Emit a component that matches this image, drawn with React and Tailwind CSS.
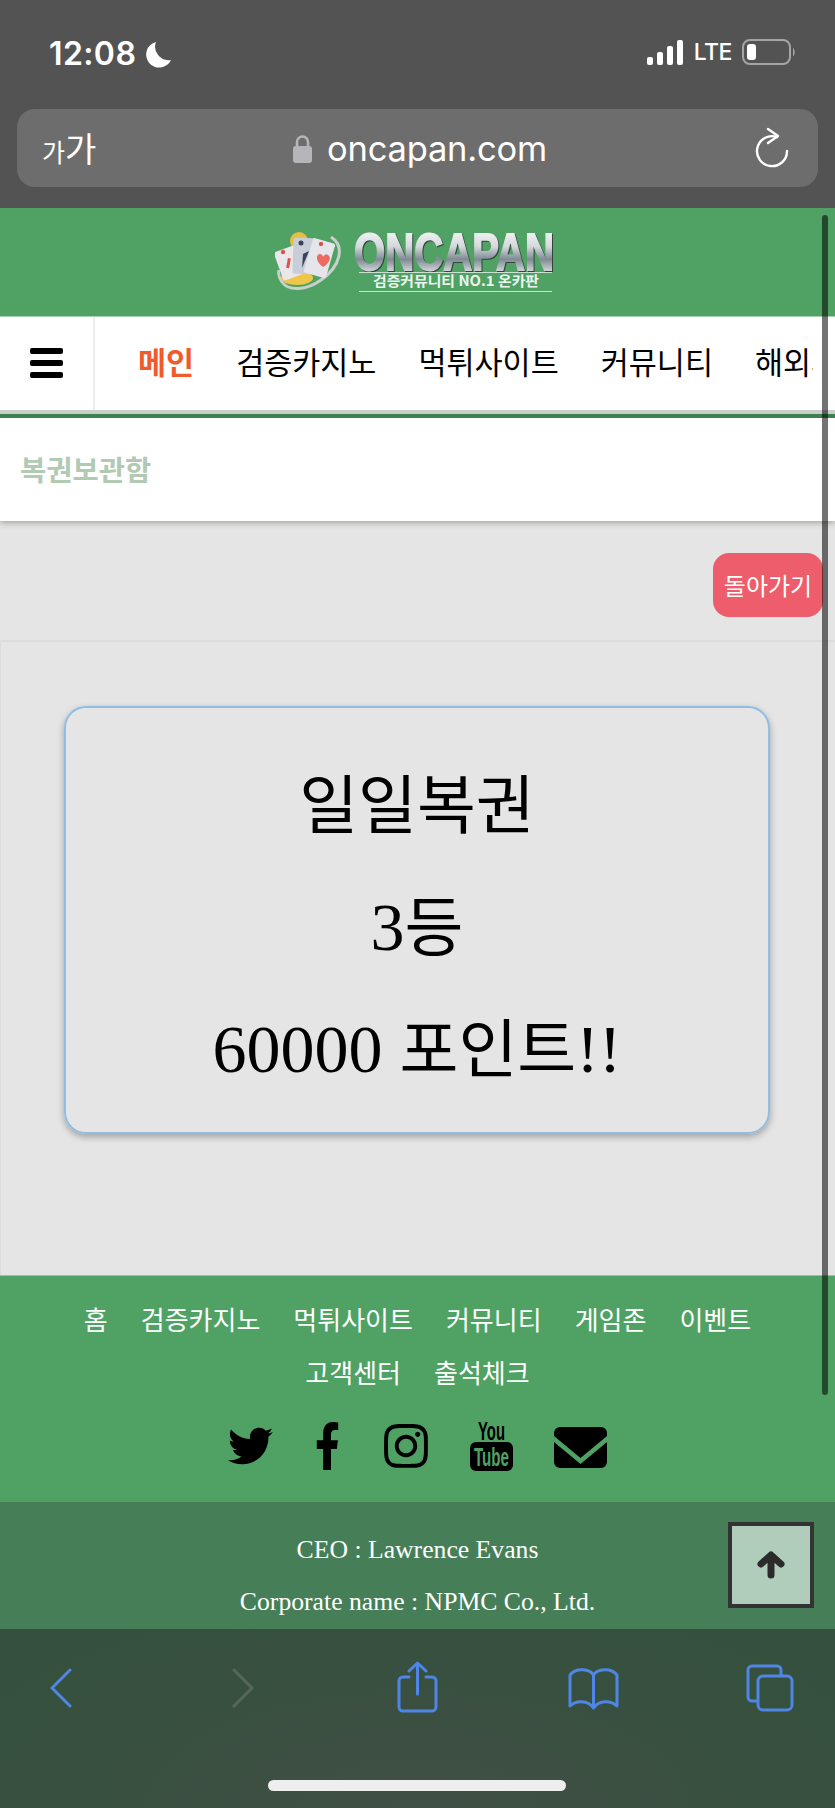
import React from 'react'
import { FaTwitter, FaFacebookF, FaInstagram } from 'react-icons/fa'

const KR = "font-['Noto_Sans_CJK_KR',sans-serif]"

const NAV = ['검증카지노', '먹튀사이트', '커뮤니티', '해외사이트']
const FOOTER_LINKS = ['홈', '검증카지노', '먹튀사이트', '커뮤니티', '게임존', '이벤트', '고객센터', '출석체크']

function StatusBar() {
  return (
    <div className="h-[109px] flex items-start justify-between pt-[37px] pl-[49px] pr-[39px] text-white">
      <div className="flex items-center gap-[9px]">
        <span className="font-['Inter',sans-serif] font-semibold text-[32px] leading-[34px] tracking-[0.4px]">12:08</span>
        <svg width="27" height="27" viewBox="0 0 27 27" fill="#fff">
          <path d="M11 1 A13 13 0 1 0 26 19 A13.5 13.5 0 0 1 11 1 Z" />
        </svg>
      </div>
      <div className="flex items-center gap-[10px] h-[30px]">
        <svg width="37" height="25" viewBox="0 0 37 25" fill="#fff">
          <rect x="0" y="17" width="6" height="8" rx="2" />
          <rect x="10" y="12" width="6" height="13" rx="2" />
          <rect x="20" y="6" width="6" height="19" rx="2" />
          <rect x="30" y="0" width="6" height="25" rx="2" />
        </svg>
        <span className="font-['Inter',sans-serif] font-medium text-[23px] leading-[30px] tracking-[-0.5px]">LTE</span>
        <svg width="54" height="26" viewBox="0 0 54 26" fill="none">
          <rect x="1" y="1" width="47" height="24" rx="7" stroke="#a5a5a5" strokeWidth="2" />
          <rect x="5" y="5" width="9" height="16" rx="3" fill="#fff" />
          <path d="M51 9 C53 10 53.5 16 51 17 Z" fill="#a5a5a5" />
        </svg>
      </div>
    </div>
  )
}

function UrlBar() {
  return (
    <div className="mx-[17px] h-[78px] rounded-[18px] bg-[#6d6d6d] flex items-center relative text-white">
      <span className={`${KR} ml-[25px] text-[34px] leading-none`}>
        <span className="text-[25px]">가</span>가
      </span>
      <div className="absolute left-[276px] top-[22px] flex items-center gap-[15px]">
        <svg width="19" height="28" viewBox="0 0 19 28" fill="none">
          <path d="M4 13 V7 A5.5 5.5 0 0 1 15 7 V13" stroke="#b5b5ba" strokeWidth="2.6" />
          <rect x="0" y="11" width="19" height="17" rx="3" fill="#b5b5ba" />
        </svg>
        <span className="font-['Inter',sans-serif] text-[34.5px] leading-[36px] tracking-[-0.2px]">oncapan.com</span>
      </div>
      <svg className="absolute right-[29px] top-[18px]" width="34" height="42" viewBox="0 0 34 42" fill="none" stroke="#fff" strokeWidth="2.4" strokeLinecap="round" strokeLinejoin="round">
        <path d="M22 10 A15 15 0 1 0 32 24" />
        <path d="M13 2 L23 9 L13 16" />
      </svg>
    </div>
  )
}

function Logo() {
  return (
    <svg width="286" height="84" viewBox="0 -12 286 84">
      <defs>
        <linearGradient id="chrome" x1="0" y1="0" x2="0" y2="1">
          <stop offset="0" stopColor="#ffffff" />
          <stop offset="0.4" stopColor="#d4d8db" />
          <stop offset="0.62" stopColor="#7f8a93" />
          <stop offset="0.8" stopColor="#c6cbcf" />
          <stop offset="1" stopColor="#f6f6f6" />
        </linearGradient>
      </defs>
      <circle cx="24" cy="9" r="9" fill="#e8bd45" />
      <ellipse cx="22" cy="46" rx="16" ry="7" fill="#efc64a" />
      <path d="M56 5 C70 14 66 34 46 48 C32 58 14 60 7 50 C4 46 3 42 4 38" fill="none" stroke="#c9cfcb" strokeWidth="3" />
      <rect x="3" y="16" width="22" height="30" rx="2" fill="#e9e7ea" transform="rotate(-20 14 31)" />
      <rect x="18" y="6" width="22" height="36" rx="2" fill="#c8cdd8" transform="rotate(2 29 24)" />
      <rect x="33" y="8" width="23" height="36" rx="2" fill="#e5e6ec" transform="rotate(16 44 26)" />
      <path d="M28 22 L34 19 L27 36 Z" fill="#39425a" />
      <circle cx="26" cy="11" r="2.5" fill="#39425a" />
      <path d="M48 35 C40 29 41 22 45 22 C47 22 48 24 48 25 C49 23 51 22 53 23 C57 25 54 32 48 35 Z" fill="#ec6a5f" />
      <rect x="12" y="26" width="3" height="10" fill="#d9564f" transform="rotate(10 13 31)" />
      <circle cx="8" cy="20" r="2.2" fill="#d9564f" />
      <circle cx="46" cy="12" r="2.2" fill="#d9564f" />
      <text
        x="79"
        y="38"
        className="drop-shadow-[1px_1px_0_#33443b]"
        fontFamily="Liberation Sans"
        fontWeight="700"
        fontSize="51"
        textLength="200"
        lengthAdjust="spacingAndGlyphs"
        fill="url(#chrome)"
        stroke="url(#chrome)"
        strokeWidth="1.8"
      >
        ONCAPAN
      </text>
      <rect x="84" y="40" width="193" height="1" fill="#c9e2cf" />
      <text x="98" y="54" fontFamily="Noto Sans CJK KR" fontWeight="700" fontSize="14" textLength="166" lengthAdjust="spacingAndGlyphs" fill="#eef5ef">검증커뮤니티 NO.1 온카판</text>
      <rect x="84" y="59" width="193" height="1" fill="#c9e2cf" />
    </svg>
  )
}

function YoutubeIcon() {
  return (
    <svg width="43" height="51" viewBox="0 0 43 51" className="overflow-visible">
      <text x="8" y="20" fontFamily="Liberation Sans" fontWeight="700" fontSize="26" textLength="27" lengthAdjust="spacingAndGlyphs" fill="#000">You</text>
      <rect x="0" y="22" width="43" height="29" rx="6" fill="#000" />
      <text x="4" y="46" fontFamily="Liberation Sans" fontWeight="700" fontSize="26" textLength="35" lengthAdjust="spacingAndGlyphs" fill="#4fa264">Tube</text>
    </svg>
  )
}

function MailIcon() {
  return (
    <svg width="53" height="41" viewBox="0 0 53 41" className="mt-[4px] ml-[-1px]">
      <path d="M0 6 A6 6 0 0 1 6 0 H47 A6 6 0 0 1 53 6 V9 L26.5 31 L0 9 Z" fill="#000" />
      <path d="M0 15 L26.5 37 L53 15 V35 A6 6 0 0 1 47 41 H6 A6 6 0 0 1 0 35 Z" fill="#000" />
    </svg>
  )
}

function BottomBar() {
  return (
    <div className="h-[179px] relative bg-[radial-gradient(ellipse_at_50%_100%,#414f46_0%,#38503f_55%,#35503e_100%)]">
      <div className="flex items-start pt-[32px] pl-[50px]">
        <svg width="22" height="40" viewBox="0 0 22 40" className="mt-[7px]" fill="none" stroke="#4f86e6" strokeWidth="3" strokeLinecap="round" strokeLinejoin="round">
          <path d="M20 2 L2 20 L20 38" />
        </svg>
        <svg width="22" height="40" viewBox="0 0 22 40" className="mt-[7px] ml-[160px]" fill="none" stroke="#56685c" strokeWidth="3" strokeLinecap="round" strokeLinejoin="round">
          <path d="M2 2 L20 20 L2 38" />
        </svg>
        <svg width="41" height="52" viewBox="0 0 41 52" className="ml-[143px]" fill="none" stroke="#4f86e6" strokeWidth="3" strokeLinecap="round" strokeLinejoin="round">
          <path d="M12 16 H6 A4 4 0 0 0 2 20 V46 A4 4 0 0 0 6 50 H35 A4 4 0 0 0 39 46 V20 A4 4 0 0 0 35 16 H29" />
          <path d="M20.5 33 V2 M12 10 L20.5 2 L29 10" />
        </svg>
        <svg width="51" height="43" viewBox="0 0 51 43" className="ml-[130px] mt-[6px]" fill="none" stroke="#4f86e6" strokeWidth="3" strokeLinecap="round" strokeLinejoin="round">
          <path d="M25.5 8 C22 2 8 0 2 8 V39 C8 33 20 33 25.5 41 C31 33 43 33 49 39 V8 C43 0 29 2 25.5 8 Z M25.5 8 V41" />
        </svg>
        <svg width="48" height="48" viewBox="0 0 48 48" className="ml-[127px] mt-[3px]" fill="none" stroke="#4f86e6" strokeWidth="3" strokeLinejoin="round">
          <path d="M35 12 V6 A4 4 0 0 0 31 2 H6 A4 4 0 0 0 2 6 V33 A4 4 0 0 0 6 37 H12" />
          <rect x="12" y="12" width="34" height="34" rx="5" />
        </svg>
      </div>
      <div className="absolute left-[268px] bottom-[17px] w-[298px] h-[11px] rounded-full bg-[#eeeeee]" />
    </div>
  )
}

export default function App() {
  return (
    <div className={`${KR} relative w-[835px] h-[1808px] overflow-hidden bg-[#e5e5e5]`}>
      <div className="h-[208px] bg-[#535353]">
        <StatusBar />
        <UrlBar />
      </div>

      <div className="h-[108px] bg-[#4fa264] flex items-center justify-center">
        <Logo />
      </div>

      <div className="h-[94px] bg-white flex border-t border-[#a9d2b3]">
        <div className="w-[95px] shrink-0 border-r-2 border-[#ececec] flex flex-col justify-center gap-[6px] pl-[30px] pb-[2px]">
          <div className="w-[33px] h-[6px] rounded-[2px] bg-black" />
          <div className="w-[33px] h-[6px] rounded-[2px] bg-black" />
          <div className="w-[33px] h-[6px] rounded-[2px] bg-black" />
        </div>
        <div className="flex-1 min-w-0 mr-[22px] pl-[43px] pb-[4px] flex items-center gap-[42px] overflow-hidden text-[30.5px] text-black whitespace-nowrap">
          <span className="font-bold text-[#f15a29]">메인</span>
          {NAV.map(n => <span key={n}>{n}</span>)}
        </div>
      </div>
      <div className="h-[4px] bg-[#c9d0ca]" />
      <div className="h-[4px] bg-[#3d8350]" />

      <div className="h-[103px] bg-white flex items-start pl-[20px] pt-[31px] shadow-[0_2px_6px_rgba(90,90,70,0.45)] relative">
        <span className="font-bold text-[28.5px] leading-[40px] text-[#b2c9b2]">복권보관함</span>
      </div>

      <div className="flex justify-end pt-[32px] pr-[12px]">
        <div className="w-[110px] h-[64px] rounded-[16px] bg-[#ee5d6c] text-white text-[24px] flex items-center justify-center">돌아가기</div>
      </div>

      <div className="mt-[23px] h-[635px] border-t-2 border-l border-[#dcdcdc] pt-[64px] pl-[63px]">
        <div className="w-[706px] h-[428px] pt-[18px] rounded-[22px] border-2 border-[#8fbde3] shadow-[0_3px_7px_rgba(0,0,0,0.3)] flex flex-col items-center justify-center gap-[32px] font-['Liberation_Serif','Noto_Sans_CJK_KR',serif] text-[68px] leading-[88px] text-black">
          <div className="text-[64px]">일일복권</div>
          <div>3<span className="text-[64px]">등</span></div>
          <div>60000 <span className="text-[64px]">포인트</span>!!</div>
        </div>
      </div>

      <div className="h-[227px] bg-[#4fa264] border-t border-[#a8b8ac] flex flex-col items-center">
        <div className="w-[720px] mt-[16px] flex flex-wrap justify-center gap-x-[33px] text-[26px] leading-[53px] text-white">
          {FOOTER_LINKS.map(l => <span key={l}>{l}</span>)}
        </div>
        <div className="mt-[22px] flex items-center gap-[42px] text-black">
          <FaTwitter className="w-[45px] h-[46px]" />
          <FaFacebookF className="w-[25px] h-[48px]" preserveAspectRatio="none" />
          <FaInstagram className="w-[44px] h-[50px] ml-[2px]" />
          <YoutubeIcon />
          <MailIcon />
        </div>
      </div>

      <div className="h-[127px] bg-[#467f57] pt-[22px] text-center font-['Liberation_Serif',serif] text-[25.7px] leading-[52px] text-white">
        <div>CEO : Lawrence Evans</div>
        <div>Corporate name : NPMC Co., Ltd.</div>
      </div>

      <BottomBar />

      <div className="absolute left-[728px] top-[1522px] w-[86px] h-[86px] border-4 border-[#333333] bg-[#b0ccba] flex items-center justify-center">
        <svg width="28" height="28" viewBox="0 0 28 28" fill="none" stroke="#2b2b2b" strokeWidth="7" strokeLinecap="round" strokeLinejoin="round">
          <path d="M14 24 V6 M4 13 L14 4 L24 13" />
        </svg>
      </div>
      <div className="absolute right-[7px] top-[215px] w-[6px] h-[1180px] rounded-full bg-black/55" />
    </div>
  )
}
